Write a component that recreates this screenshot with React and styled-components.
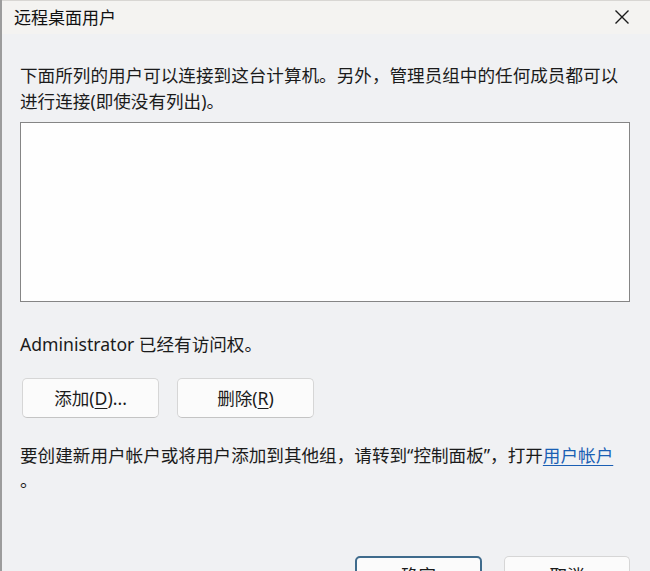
import React from "react";
import styled, { createGlobalStyle } from "styled-components";

const GlobalStyle = createGlobalStyle`
  html, body {
    margin: 0;
    padding: 0;
    background: #f0f1f3;
  }
  body {
    font-family: "Noto Sans", "Noto Sans CJK SC", sans-serif;
    color: #1b1b1b;
  }
`;

const Window = styled.div`
  width: 650px;
  height: 571px;
  overflow: hidden;
  box-sizing: border-box;
  border-left: 2px solid #9c9c9c;
  background: #f0f1f3;
  display: flex;
  flex-direction: column;
`;

const TitleBar = styled.div`
  height: 34px;
  flex: none;
  display: flex;
  align-items: center;
  justify-content: space-between;
  padding: 0 18px 2px 12px;
  background: #f4f3f1;
  border-top: 1px solid #d8d6d3;
  box-sizing: border-box;
`;

const Title = styled.span`
  font-size: 17px;
  font-family: "Noto Sans CJK SC", sans-serif;
  color: #111;
`;

const CloseButton = styled.button`
  border: none;
  background: none;
  padding: 0;
  width: 20px;
  height: 20px;
  display: flex;
  align-items: center;
  justify-content: center;
  cursor: pointer;
`;

const Body = styled.div`
  flex: 1;
  padding: 29px 20px 0 18px;
  display: flex;
  flex-direction: column;
`;

const Text = styled.p`
  margin: ${(p) => p.$margin || "0"};
  font-size: 17.6px;
  line-height: 25.5px;
  font-family: "Noto Sans", "Noto Sans CJK SC", sans-serif;
  color: #1b1b1b;
  white-space: nowrap;
`;

const ListBox = styled.div`
  margin-top: 8px;
  height: 178px;
  background: #fefefe;
  border: 1px solid #858585;
`;

const ButtonRow = styled.div`
  display: flex;
  gap: ${(p) => p.$gap || "18px"};
  justify-content: ${(p) => p.$justify || "flex-start"};
  margin: ${(p) => p.$margin || "0"};
`;

const DialogButton = styled.button`
  width: ${(p) => p.$width || "137px"};
  height: ${(p) => p.$height || "40px"};
  box-sizing: border-box;
  border: ${(p) => (p.$primary ? "2px solid #3f6b8c" : "1px solid #d6d6d6")};
  border-bottom-color: ${(p) => (p.$primary ? "#3f6b8c" : "#c4c4c4")};
  border-radius: 5px;
  background: #fbfbfb;
  font-size: 17.6px;
  font-family: "Noto Sans", "Noto Sans CJK SC", sans-serif;
  color: #1b1b1b;
  padding: 0;
  cursor: pointer;
`;

const Key = styled.span`
  text-decoration: underline;
  text-underline-offset: 3px;
`;

const Link = styled.a`
  color: #1a5fb4;
  text-decoration: underline;
  text-underline-offset: 3px;
  cursor: pointer;
`;

function CloseIcon() {
  return (
    <svg width="16" height="16" viewBox="0 0 16 16">
      <path d="M1.5 1.5 L14.5 14.5 M14.5 1.5 L1.5 14.5" stroke="#1a1a1a" strokeWidth="1.4" fill="none" />
    </svg>
  );
}

export default function App() {
  return (
    <>
      <GlobalStyle />
      <Window>
        <TitleBar>
          <Title>远程桌面用户</Title>
          <CloseButton aria-label="关闭">
            <CloseIcon />
          </CloseButton>
        </TitleBar>
        <Body>
          <Text>
            下面所列的用户可以连接到这台计算机。另外，管理员组中的任何成员都可以
            <br />
            进行连接(即使没有列出)。
          </Text>
          <ListBox />
          <Text $margin="30px 0 0 0">Administrator 已经有访问权。</Text>
          <ButtonRow $margin="20px 0 0 2px">
            <DialogButton>
              添加(<Key>D</Key>)...
            </DialogButton>
            <DialogButton>
              删除(<Key>R</Key>)
            </DialogButton>
          </ButtonRow>
          <Text $margin="25px 0 0 0">
            要创建新用户帐户或将用户添加到其他组，请转到“控制面板”，打开<Link>用户帐户</Link>
            <br />。
          </Text>
          <ButtonRow $justify="flex-end" $gap="22px" $margin="62px 0 0 0">
            <DialogButton $primary $width="127px" $height="38px">
              确定
            </DialogButton>
            <DialogButton $width="126px" $height="38px">
              取消
            </DialogButton>
          </ButtonRow>
        </Body>
      </Window>
    </>
  );
}
